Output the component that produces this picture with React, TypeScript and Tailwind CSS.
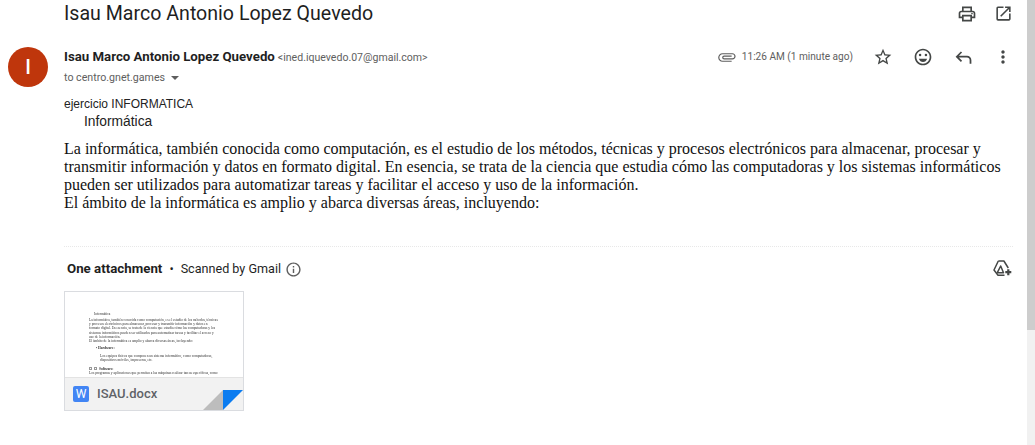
import { MdInfoOutline, MdMoreVert, MdOpenInNew, MdOutlineAttachment, MdOutlineEmojiEmotions, MdOutlinePrint, MdOutlineStarBorder } from "react-icons/md";

function ReplyIcon() {
    return (
        <svg width="21" height="21" viewBox="0 0 24 24" fill="currentColor">
            <path d="M19 19v-4q0-1.25-.875-2.125T16 12H6.8l3.6 3.6L9 17l-6-6 6-6 1.4 1.4L6.8 10H16q2.075 0 3.537 1.463T21 15v4z" />
        </svg>
    );
}

function DriveAdd() {
    return (
        <svg width="20" height="18" viewBox="0 0 20 18" fill="none" stroke="#444746" strokeWidth="1.5" strokeLinejoin="round">
            <path d="M5.3 1h5.6l4.4 7" />
            <path d="M5.3 1L1 10l4 5.2h6.5" />
            <path d="M7.7 6l-3.4 6.7H10.5z" />
            <path d="M15.3 9.2v6M12.3 12.2h6" strokeWidth="2.2" />
        </svg>
    );
}

function Thumbnail() {
    return (
        <div className="relative w-[180px] h-[120px] border border-[#dadce0] bg-white overflow-hidden flex flex-col">
            <div className="flex-1 overflow-hidden pl-[24px] pr-[24px] pt-[20px] blur-[0.3px] font-['Liberation_Serif',serif] text-[3.5px] leading-[4.15px] text-[#333]">
                <p className="pl-[5px] mb-[2px]">Informática</p>
                <p>La informática, también conocida como computación, es el estudio de los métodos, técnicas y procesos electrónicos para almacenar, procesar y transmitir información y datos en formato digital. En esencia, se trata de la ciencia que estudia cómo las computadoras y los sistemas informáticos pueden ser utilizados para automatizar tareas y facilitar el acceso y uso de la información.</p>
                <p>El ámbito de la informática es amplio y abarca diversas áreas, incluyendo:</p>
                <p className="pl-[7px] mt-[3px] font-bold">• Hardware:</p>
                <p className="pl-[11px] mt-[4px]">Los equipos físicos que componen un sistema informático, como computadoras, dispositivos móviles, impresoras, etc.</p>
                <div className="flex items-center gap-[2px] mt-[4px] font-bold">
                    <span className="w-[3px] h-[3px] border-[0.5px] border-[#999]" />
                    <span className="w-[3px] h-[3px] border-[0.5px] border-[#999]" />
                    <span>Software:</span>
                </div>
                <p className="whitespace-nowrap">Los programas y aplicaciones que permiten a las máquinas realizar tareas específicas, como</p>
            </div>
            <div className="h-[33px] bg-[#f2f2f2] border-t border-[#e3e3e3] flex items-center gap-[8px] pl-[8px] shrink-0">
                <div className="w-[16px] h-[16px] rounded-[2px] bg-[#4285f4] text-white flex items-center justify-center font-['Roboto',sans-serif] text-[12px] leading-none">W</div>
                <span className="font-['Roboto',sans-serif] font-medium text-[13px] text-[#5f6368]">ISAU.docx</span>
            </div>
            <svg className="absolute right-0 bottom-0" width="40" height="20" viewBox="0 0 40 20">
                <path d="M20 0v20H0z" fill="#bdbdbd" />
                <path d="M20 0h20L20 20z" fill="#0b7cf0" />
            </svg>
        </div>
    );
}

export default function App() {
    return (
        <div className="w-[1035px] h-[445px] bg-white flex overflow-hidden font-['Roboto',sans-serif]">
            <div className="flex-1 min-w-0">
                <div className="h-[27px] flex items-center justify-between pl-[64px] pr-[6px]">
                    <h1 className="text-[19.6px] leading-[27px] text-[#1f1f1f]">Isau Marco Antonio Lopez Quevedo</h1>
                    <div className="flex items-center text-[#444746]">
                        <div className="w-[36px] flex justify-center"><MdOutlinePrint size={20} /></div>
                        <div className="w-[36px] flex justify-center"><MdOpenInNew size={19} /></div>
                    </div>
                </div>

                <div className="flex pl-[8px] pr-[4px] pt-[20px]">
                    <div className="w-[40px] h-[40px] rounded-full bg-[#bf360c] text-white flex items-center justify-center text-[20px] font-medium mr-[16px] shrink-0">I</div>
                    <div className="flex-1 min-w-0">
                        <div className="flex items-center justify-between h-[20px]">
                            <div className="flex items-baseline gap-[3px]">
                                <span className="text-[13.25px] font-bold text-[#1f1f1f]">Isau Marco Antonio Lopez Quevedo</span>
                                <span className="text-[10.55px] text-[#5e5e5e]">&lt;ined.iquevedo.07@gmail.com&gt;</span>
                            </div>
                            <div className="flex items-center text-[#444746]">
                                <MdOutlineAttachment size={19} className="text-[#5e5e5e] mr-[6px]" />
                                <span className="text-[10.1px] text-[#5e5e5e] mr-[10px]">11:26 AM (1 minute ago)</span>
                                <div className="w-[40px] flex justify-center"><MdOutlineStarBorder size={20} /></div>
                                <div className="w-[40px] flex justify-center"><MdOutlineEmojiEmotions size={20} /></div>
                                <div className="w-[40px] flex justify-center"><ReplyIcon /></div>
                                <div className="w-[40px] flex justify-center"><MdMoreVert size={20} /></div>
                            </div>
                        </div>
                        <div className="flex items-center h-[20px] mt-[1px] text-[10.65px] text-[#5e5e5e]">
                            to centro.gnet.games
                            <span className="ml-[6px] w-0 h-0 border-x-[4px] border-x-transparent border-t-[4px] border-t-[#5e5e5e]" />
                        </div>
                    </div>
                </div>

                <div className="pl-[64px] pr-[20px] pt-[8px] font-['Liberation_Sans',sans-serif] text-[12px] leading-[16px] text-[#222]">
                    <p>ejercicio INFORMATICA</p>
                    <p className="pl-[20px] text-[13.8px] leading-[19px]">Informática</p>
                </div>

                <div className="pl-[64px] pr-[20px] pt-[9px] font-['Liberation_Serif',serif] text-[16px] leading-[18px] text-[#111]">
                    <p>La informática, también conocida como computación, es el estudio de los métodos, técnicas y procesos electrónicos para almacenar, procesar y transmitir información y datos en formato digital. En esencia, se trata de la ciencia que estudia cómo las computadoras y los sistemas informáticos pueden ser utilizados para automatizar tareas y facilitar el acceso y uso de la información.</p>
                    <p>El ámbito de la informática es amplio y abarca diversas áreas, incluyendo:</p>
                </div>

                <div className="ml-[64px] mr-[14px] mt-[34px] border-t border-dotted border-[#e8e8e8]" />
                <div className="flex items-center justify-between pl-[67px] pr-[14px] h-[44px]">
                    <div className="flex items-center text-[12.6px] text-[#1f1f1f]">
                        <span className="font-bold text-[13.3px]">One attachment</span>
                        <span className="mx-[7px]">•</span>
                        <span>Scanned by Gmail</span>
                        <MdInfoOutline size={17} className="ml-[4px] text-[#5e5e5e]" />
                    </div>
                    <DriveAdd />
                </div>
                <div className="pl-[64px]">
                    <Thumbnail />
                </div>
            </div>
            <div className="w-[8px] shrink-0 flex flex-col bg-[#f1f1f1]">
                <div className="h-[330px] bg-[#cdcdcd]" />
            </div>
        </div>
    );
}
